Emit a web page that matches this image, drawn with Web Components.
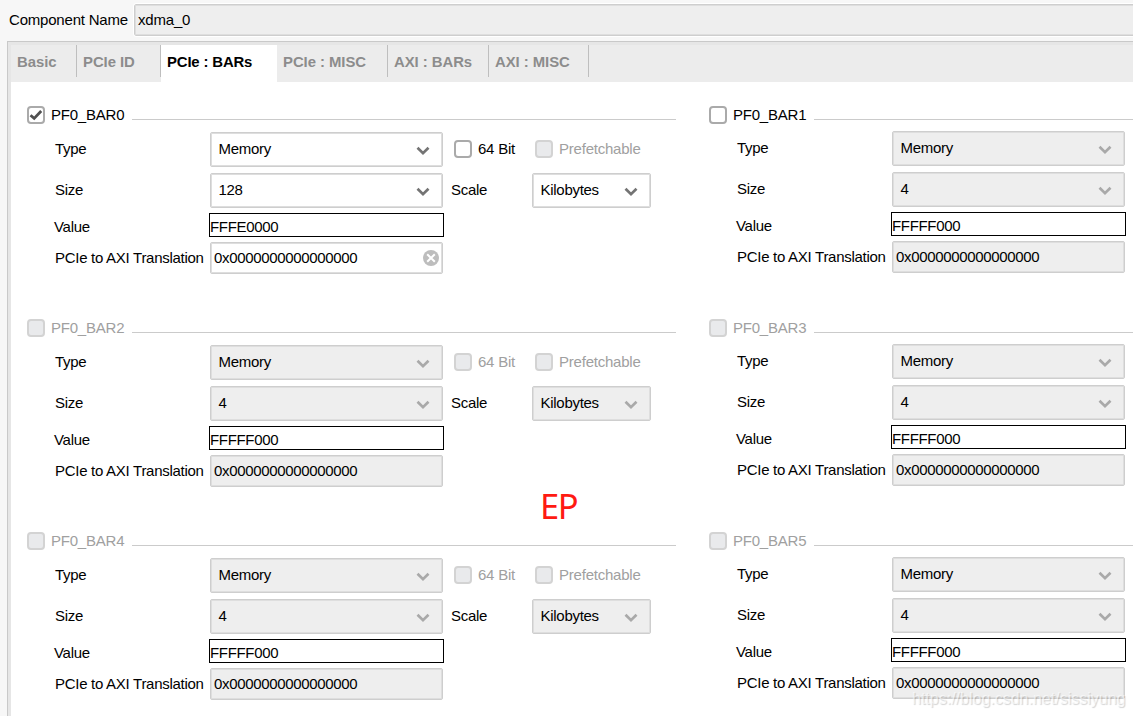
<!DOCTYPE html>
<html lang="en">
<head>
<meta charset="utf-8">
<title>xdma_0</title>
<style>
  html, body {
    margin: 0;
    height: 100%;
    overflow: hidden;
  }
  body {
    font-family: "Liberation Sans", Arial, sans-serif;
    font-size: 15px;
    letter-spacing: -.28px;
    color: #000;
    background: #f7f7f7;
  }
</style>
</head>
<body>
<ip-customizer></ip-customizer>

<script>
const define = (name, html, setup) => {
  const template = document.createElement('template');
  template.innerHTML = html;

  customElements.define(name, class extends HTMLElement {
    constructor() {
      super();
      this.attachShadow({ mode: 'open' });
      this.shadowRoot.appendChild(template.content.cloneNode(true));
    }

    connectedCallback() {
      if (setup) setup(this, this.shadowRoot);
    }
  });
};

define('check-box', `
  <style>
    :host {
      display: flex;
      align-items: center;
      height: 18px;
      white-space: nowrap;
      letter-spacing: -.22px;
    }
    .box {
      box-sizing: border-box;
      flex: none;
      width: 18px;
      height: 18px;
      margin-right: 6px;
      border: 2px solid #aaa;
      border-radius: 4px;
      background: #fff;
    }
    .text { padding-bottom: 2px; }
    svg { display: none; }
    :host([checked]) svg { display: block; }
    :host([disabled]) { color: #a0a0a0; }
    :host([disabled]) .box {
      border-color: #d3d3d3;
      background: #e9eaec;
    }
  </style>
  <span class="box">
    <svg width="14" height="14" viewBox="0 0 14 14" fill="none" stroke="#505050" stroke-width="2.8">
      <path d="M1.5 7.2 L5.2 10.4 L12.2 3"/>
    </svg>
  </span>
  <span class="text"><slot></slot></span>
`);

define('select-box', `
  <style>
    :host {
      box-sizing: border-box;
      display: flex;
      align-items: center;
      justify-content: space-between;
      height: 35px;
      padding: 0 12px 1px 7.5px;
      border: 1px solid #cecece;
      border-radius: 2px;
      box-shadow: inset 0 0 0 1px #dedede;
      background: #fff;
      color: #000;
    }
    span { padding-bottom: 2px; }
    svg { margin-top: 3px; stroke: #747474; }
    :host([disabled]) { background: #eee; }
    :host([disabled]) svg { stroke: #a9a9a9; }
  </style>
  <span><slot></slot></span>
  <svg width="14" height="10" viewBox="0 0 14 10" fill="none" stroke-width="2.7">
    <path d="M1.5 1.7 L7 7.1 L12.5 1.7"/>
  </svg>
`);

define('text-box', `
  <style>
    :host {
      box-sizing: border-box;
      display: flex;
      align-items: center;
      justify-content: space-between;
      height: 32px;
      padding: 0 3px;
      border: 1px solid #cecece;
      border-radius: 2px;
      box-shadow: inset 0 0 0 1px #dedede;
      background: #fff;
      letter-spacing: -.33px;
    }
    span { padding-bottom: 1px; }
    svg { display: none; }
    :host([clearable]) svg { display: block; }
    :host([disabled]) { background: #eee; }
    :host([plain]) {
      height: 24px;
      margin: 0 -1px;
      padding: 3px 0 0;
      border: 1px solid #000;
      border-radius: 0;
      box-shadow: none;
    }
    :host([plain]) span { padding: 0; }
  </style>
  <span><slot></slot></span>
  <svg width="16" height="16" viewBox="0 0 16 16">
    <circle cx="8" cy="8" r="8" fill="#bdbdbd"/>
    <path d="M4.2 4.2 L11.8 11.8 M11.8 4.2 L4.2 11.8" stroke="#fff" stroke-width="2"/>
  </svg>
`);

define('bar-section', `
  <style>
    :host {
      display: block;
      height: 213px;
    }
    header {
      display: flex;
      align-items: center;
      height: 18px;
    }
    header check-box { width: 105px; }
    .line {
      flex: 1;
      height: 1px;
      margin-top: 9px;
      background: #cbcbcb;
    }
    .fields {
      display: grid;
      grid-template-columns: 155px 233px 1fr;
      grid-template-rows: 35px 35px 24px 32px;
      row-gap: 6px;
      padding: 8px 0 0 28px;
    }
    :host([narrow]) .fields { padding-top: 7px; }
    .fields > * { min-width: 0; }
    label {
      align-self: center;
      padding-bottom: 3px;
      white-space: nowrap;
    }
    .value-label { margin-left: -1px; padding: 3px 0 0; }
    .translation-label { padding-bottom: 1px; }
    .value, .value-label { position: relative; top: -1px; }
    .translation, .translation-label { position: relative; top: -2px; }
    .side {
      display: flex;
      align-items: center;
    }
    .flags { padding-left: 11px; padding-bottom: 1px; }
    .bit { width: 81px; }
    .scale { padding-left: 8px; }
    .scale label { width: 81px; }
    .scale select-box { width: 119px; }
  </style>
  <header><check-box class="enable"></check-box><div class="line"></div></header>
  <div class="fields">
    <label>Type</label>
    <select-box class="type">Memory</select-box>
    <div class="side flags">
      <check-box class="bit">64 Bit</check-box>
      <check-box disabled>Prefetchable</check-box>
    </div>
    <label>Size</label>
    <select-box class="size"></select-box>
    <div class="side scale">
      <label>Scale</label>
      <select-box class="unit">Kilobytes</select-box>
    </div>
    <label class="value-label">Value</label>
    <text-box plain class="value"></text-box>
    <span></span>
    <label class="translation-label">PCIe to AXI Translation</label>
    <text-box class="translation">0x0000000000000000</text-box>
  </div>
`, (host, root) => {
  const $ = (selector) => root.querySelector(selector);
  const enabled = host.hasAttribute('enabled');

  $('.enable').textContent = host.getAttribute('name');
  $('.enable').toggleAttribute('checked', enabled);
  $('.enable').toggleAttribute('disabled', !enabled && !host.hasAttribute('available'));
  $('.size').textContent = host.getAttribute('size');
  $('.value').textContent = host.getAttribute('value');
  $('.translation').toggleAttribute('clearable', enabled);

  root.querySelectorAll('.type, .size, .unit, .bit, .translation').forEach((field) => {
    field.toggleAttribute('disabled', !enabled);
  });

  // odd BARs have no 64 bit, prefetch or scale options
  if (host.hasAttribute('narrow')) {
    $('.flags').replaceChildren();
    $('.scale').replaceChildren();
  }
});

define('tab-item', `
  <style>
    :host {
      box-sizing: border-box;
      height: 37px;
      padding: 0 0 0 6px;
      font-size: 14.9px;
      font-weight: bold;
      letter-spacing: -.05px;
      line-height: 34px;
      color: #8c8c8c;
      white-space: nowrap;
      background: linear-gradient(#bebebe, #bebebe) right top / 1px 32px no-repeat;
    }
    :host([active]) {
      color: #000;
      background: #fff;
      letter-spacing: -.15px;
    }
  </style>
  <slot></slot>
`);

define('ip-customizer', `
  <style>
    :host {
      position: relative;
      display: flex;
      flex-direction: column;
      height: 716px;
      overflow: hidden;
    }
    .name {
      display: flex;
      align-items: center;
      height: 32px;
      padding: 4px 0 5px 9px;
    }
    .name label {
      width: 125px;
      padding-bottom: 1px;
      letter-spacing: -.2px;
    }
    .name text-box {
      flex: 1;
      margin-right: -4px;
      outline: 1px solid #fff;
      letter-spacing: -.2px;
    }
    .panel {
      flex: 1;
      margin-left: 7px;
      border: 1px solid #c9c9c9;
      border-width: 1px 0 0 1px;
      background: #e6e6e6;
      padding: 3px 0 0 3px;
    }
    .tabs {
      display: grid;
      grid-template-columns: 66px 84px 116px 111px 101px 100px;
      height: 37px;
      background: #ececec;
    }
    .bars {
      display: grid;
      grid-template-columns: 649px 1fr;
      column-gap: 33px;
      height: 640px;
      padding: 24px 0 0 16px;
      align-content: start;
      background: #fff;
    }
    .note {
      position: absolute;
      left: 540px;
      top: 482px;
      font: 34.5px/48px "Noto Sans", sans-serif;
      letter-spacing: -1.4px;
      color: #ff1a12;
    }
    .watermark {
      position: absolute;
      left: 912px;
      top: 689px;
      font-size: 16px;
      line-height: 20px;
      letter-spacing: 0;
      color: rgba(255, 255, 255, .6);
      text-shadow: 1px 1px 1px rgba(0, 0, 0, .18);
      white-space: nowrap;
    }
  </style>
  <div class="name">
    <label>Component Name</label>
    <text-box disabled>xdma_0</text-box>
  </div>
  <div class="panel">
    <nav class="tabs">
      <tab-item>Basic</tab-item>
      <tab-item>PCIe ID</tab-item>
      <tab-item active>PCIe : BARs</tab-item>
      <tab-item>PCIe : MISC</tab-item>
      <tab-item>AXI : BARs</tab-item>
      <tab-item>AXI : MISC</tab-item>
    </nav>
    <div class="bars">
      <bar-section name="PF0_BAR0" size="128" value="FFFE0000" enabled></bar-section>
      <bar-section name="PF0_BAR1" size="4" value="FFFFF000" available narrow></bar-section>
      <bar-section name="PF0_BAR2" size="4" value="FFFFF000"></bar-section>
      <bar-section name="PF0_BAR3" size="4" value="FFFFF000" narrow></bar-section>
      <bar-section name="PF0_BAR4" size="4" value="FFFFF000"></bar-section>
      <bar-section name="PF0_BAR5" size="4" value="FFFFF000" narrow></bar-section>
    </div>
  </div>
  <div class="note">EP</div>
  <div class="watermark">https://blog.csdn.net/sissiyung</div>
`);
</script>
</body>
</html>
